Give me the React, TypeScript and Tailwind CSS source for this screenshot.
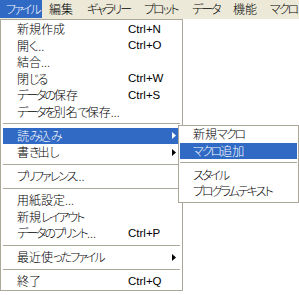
import React from "react";

type Item =
  | { kind: "sep" }
  | { kind: "item"; label: string; shortcut?: string; sub?: boolean; active?: boolean };

const fileMenu: Item[] = [
  { kind: "item", label: "新規作成", shortcut: "Ctrl+N" },
  { kind: "item", label: "開く...", shortcut: "Ctrl+O" },
  { kind: "item", label: "結合..." },
  { kind: "item", label: "閉じる", shortcut: "Ctrl+W" },
  { kind: "item", label: "データの保存", shortcut: "Ctrl+S" },
  { kind: "item", label: "データを別名で保存..." },
  { kind: "sep" },
  { kind: "item", label: "読み込み", sub: true, active: true },
  { kind: "item", label: "書き出し", sub: true },
  { kind: "sep" },
  { kind: "item", label: "プリファレンス..." },
  { kind: "sep" },
  { kind: "item", label: "用紙設定..." },
  { kind: "item", label: "新規レイアウト" },
  { kind: "item", label: "データのプリント...", shortcut: "Ctrl+P" },
  { kind: "sep" },
  { kind: "item", label: "最近使ったファイル", sub: true },
  { kind: "sep" },
  { kind: "item", label: "終了", shortcut: "Ctrl+Q" },
];

const importMenu: Item[] = [
  { kind: "item", label: "新規マクロ" },
  { kind: "item", label: "マクロ追加", active: true },
  { kind: "sep" },
  { kind: "item", label: "スタイル" },
  { kind: "item", label: "プログラムテキスト" },
];

const bar = [
  { label: "ファイル", w: "w-[42px] pl-[6px]", active: true },
  { label: "編集", w: "w-[38px] pl-[7px]" },
  { label: "ギャラリー", w: "w-[57px] pl-[7px]" },
  { label: "プロット", w: "w-[48px] pl-[7px]" },
  { label: "データ", w: "w-[41px] pl-[7px]" },
  { label: "機能", w: "w-[37px] pl-[7px]" },
  { label: "マクロ", w: "w-[40px] pl-[7px]" },
];

// the old UI font sets kana much narrower than Noto does, so kana runs get tightened
function Jp({ text }: { text: string }) {
  const runs = text.match(/[\u3041-\u30fa\u30fc]+|[^\u3041-\u30fa\u30fc]+/g) ?? [];
  return (
    <>
      {runs.map((r, i) =>
        /[\u3041-\u30fa]/.test(r) ? (
          <span key={i} className="tracking-[-2px]">
            {r}
          </span>
        ) : (
          <span key={i}>{r}</span>
        )
      )}
    </>
  );
}

function Arrow({ white }: { white?: boolean }) {
  return (
    <svg width="4" height="7" viewBox="0 0 4 7" className="block">
      <path d="M0 0 L4 3.5 L0 7 Z" fill={white ? "#ffffff" : "#000000"} />
    </svg>
  );
}

function Rows({ items, labelPad, labelW }: { items: Item[]; labelPad: string; labelW: string }) {
  return (
    <>
      {items.map((it, i) =>
        it.kind === "sep" ? (
          <div key={i} className="h-[7.5px] flex items-center">
            <div className="h-px w-full bg-[#aca899]" />
          </div>
        ) : (
          <div
            key={i}
            className={`h-[16.5px] flex items-center ${labelPad} ${
              it.active ? "bg-[#316ac5] text-white" : "text-black"
            }`}
          >
            <span className={`${labelW} whitespace-nowrap`}>
              <Jp text={it.label} />
            </span>
            {it.shortcut && (
              <span className="whitespace-nowrap font-['Liberation_Sans',sans-serif] text-[11.5px]">
                {it.shortcut}
              </span>
            )}
            {it.sub && (
              <span className="ml-auto mr-[4px]">
                <Arrow white={it.active} />
              </span>
            )}
          </div>
        )
      )}
    </>
  );
}

export default function App() {
  return (
    <div className="relative w-[299px] h-[295px] bg-white overflow-hidden text-[12px] leading-none font-light font-['Noto_Sans_CJK_JP',sans-serif] [font-feature-settings:'palt']">
      <div className="h-[19px] bg-[#ece9d8] flex border-b border-white box-content">
        {bar.map((b) => (
          <div
            key={b.label}
            className={`${b.w} shrink-0 h-[18px] flex items-center whitespace-nowrap ${
              b.active ? "bg-[#316ac5] text-white" : "text-black"
            }`}
          >
            <Jp text={b.label} />
          </div>
        ))}
      </div>

      <div className="absolute left-0 top-[19px] w-[183px] bg-white border border-[#aca899] px-[2px] pt-px">
        <Rows items={fileMenu} labelPad="pl-[14px]" labelW="w-[111px]" />
      </div>

      <div className="absolute left-[178px] top-[125px] w-[121px] bg-white border border-[#aca899] px-px pb-[2px]">
        <Rows items={importMenu} labelPad="pl-[13px]" labelW="" />
      </div>
    </div>
  );
}
